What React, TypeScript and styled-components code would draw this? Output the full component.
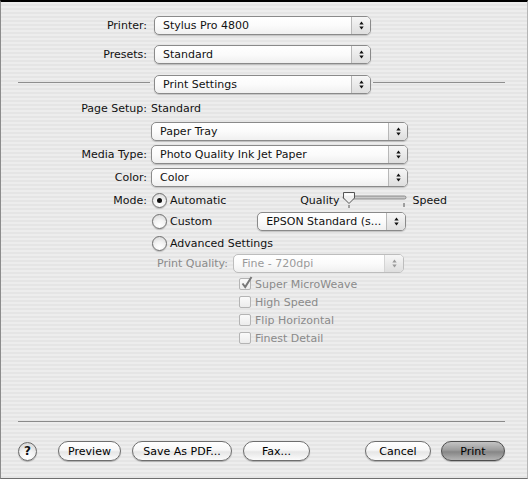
import React from "react";
import styled, { createGlobalStyle, css } from "styled-components";

const Global = createGlobalStyle`
  html, body { margin: 0; padding: 0; background: #e9e9e9; }
  body { font-family: "DejaVu Sans", "Liberation Sans", sans-serif; font-size: 11px; color: #111; }
  * { box-sizing: border-box; }
`;

const Window = styled.div`
  width: 528px;
  height: 479px;
  border-top: 2px solid #000;
  border-left: 1px solid #8c8c8c;
  border-right: 1px solid #b5b5b5;
  border-bottom: 1px solid #6f6f6f;
  background: repeating-linear-gradient(
    to bottom,
    #ededed 0px,
    #ededed 2px,
    #e5e5e5 2px,
    #e5e5e5 4px
  );
  display: flex;
  flex-direction: column;
`;

const Row = styled.div<{ $mt: number; $h?: number; $pl?: number }>`
  display: flex;
  align-items: center;
  margin-top: ${(p) => p.$mt}px;
  height: ${(p) => p.$h ?? 19}px;
  padding-left: ${(p) => p.$pl ?? 0}px;
  white-space: nowrap;
`;

const Label = styled.div<{ $disabled?: boolean }>`
  width: 146px;
  text-align: right;
  color: ${(p) => (p.$disabled ? "#8a8a8a" : "#111")};
`;

const PlainText = styled.span<{ $ml?: number; $disabled?: boolean }>`
  margin-left: ${(p) => p.$ml ?? 0}px;
  color: ${(p) => (p.$disabled ? "#8a8a8a" : "#111")};
`;

const PopupBox = styled.div<{ $w: number; $ml: number; $disabled?: boolean }>`
  position: relative;
  width: ${(p) => p.$w}px;
  height: 19px;
  margin-left: ${(p) => p.$ml}px;
  border: 1px solid ${(p) => (p.$disabled ? "#bdbdbd" : "#8a8a8a")};
  border-radius: 5px;
  background: linear-gradient(to bottom, #ffffff 0%, #fbfbfb 50%, #f0f0f0 100%);
  box-shadow: ${(p) => (p.$disabled ? "none" : "0 1px 1px rgba(0,0,0,0.18)")};
  display: flex;
  align-items: center;
  color: ${(p) => (p.$disabled ? "#9a9a9a" : "#111")};
`;

const PopupText = styled.span`
  flex: 1;
  padding-left: 8px;
  overflow: hidden;
`;

const PopupArrows = styled.div<{ $disabled?: boolean }>`
  width: 19px;
  height: 100%;
  border-left: 1px solid ${(p) => (p.$disabled ? "#d4d4d4" : "#b8b8b8")};
  border-radius: 0 4px 4px 0;
  background: linear-gradient(to bottom, #f6f6f6 0%, #e9e9e9 55%, #dedede 100%);
  display: flex;
  align-items: center;
  justify-content: center;
`;

const Arrows = ({ disabled }: { disabled?: boolean }) => (
  <svg width="7" height="11" viewBox="0 0 7 11">
    <polygon points="3.5,1.5 5.7,4.5 1.3,4.5" fill={disabled ? "#9a9a9a" : "#111"} />
    <polygon points="1.3,6.5 5.7,6.5 3.5,9.5" fill={disabled ? "#9a9a9a" : "#111"} />
  </svg>
);

const Popup = ({
  text,
  w,
  ml,
  disabled,
}: {
  text: string;
  w: number;
  ml: number;
  disabled?: boolean;
}) => (
  <PopupBox $w={w} $ml={ml} $disabled={disabled}>
    <PopupText>{text}</PopupText>
    <PopupArrows $disabled={disabled}>
      <Arrows disabled={disabled} />
    </PopupArrows>
  </PopupBox>
);

const Rule = styled.div<{ $ml: number; $w?: number; $mr?: number }>`
  height: 1px;
  background: #8e8e8e;
  margin-left: ${(p) => p.$ml}px;
  margin-right: ${(p) => p.$mr ?? 0}px;
  ${(p) =>
    p.$w
      ? css`
          width: ${p.$w}px;
        `
      : css`
          flex: 1;
        `}
  align-self: center;
  transform: translateY(-2px);
`;

const RadioCircle = styled.span<{ $ml: number; $on?: boolean }>`
  width: 15px;
  height: 15px;
  margin-left: ${(p) => p.$ml}px;
  border-radius: 50%;
  border: 1px solid #6e6e6e;
  background: radial-gradient(circle at 50% 80%, #ffffff 0%, #f3f3f3 45%, #d2d2d2 100%);
  box-shadow: 0 1px 1px rgba(0, 0, 0, 0.2);
  display: flex;
  align-items: center;
  justify-content: center;
  flex-shrink: 0;
  &::after {
    content: "";
    display: ${(p) => (p.$on ? "block" : "none")};
    width: 5px;
    height: 5px;
    border-radius: 50%;
    background: #111;
  }
`;

const RadioLabel = styled.span`
  margin-left: 3px;
`;

const SliderGroup = styled.div`
  display: flex;
  align-items: center;
  margin-left: auto;
  margin-right: 80px;
`;

const Slider = () => (
  <svg width="66" height="19" viewBox="0 0 66 19" style={{ margin: "0 5px 0 2px" }}>
    <rect x="1" y="5" width="63" height="3" rx="1.5" fill="#c9c9c9" stroke="#7a7a7a" strokeWidth="0.8" />
    <line x1="62" y1="12" x2="62" y2="16" stroke="#555" strokeWidth="1" />
    <line x1="7" y1="14" x2="7" y2="17" stroke="#555" strokeWidth="1" />
    <path d="M1.5 1.5 H12.5 V7 L7 12.5 L1.5 7 Z" fill="#efefef" stroke="#555" strokeWidth="1" />
    <path d="M2.5 2.5 H11.5 V4.5 H2.5 Z" fill="#ffffff" />
  </svg>
);

const CheckBox = styled.span`
  position: relative;
  width: 12px;
  height: 12px;
  border: 1px solid #b4b4b4;
  border-radius: 2px;
  background: linear-gradient(to bottom, #fafafa, #ececec);
  flex-shrink: 0;
`;

const CheckMark = styled.svg`
  position: absolute;
  left: 1px;
  top: -3px;
`;

const CheckLabel = styled.span`
  margin-left: 4px;
  color: #8a8a8a;
`;

const Check = ({ label, checked }: { label: string; checked?: boolean }) => (
  <Row $mt={0} $h={18} $pl={238}>
    <CheckBox>
      {checked && (
        <CheckMark width="12" height="13" viewBox="0 0 12 13">
          <path d="M1.5 7.5 L4.2 11 L10.5 1" fill="none" stroke="#777" strokeWidth="2" />
        </CheckMark>
      )}
    </CheckBox>
    <CheckLabel>{label}</CheckLabel>
  </Row>
);

const Spacer = styled.div`
  flex: 1;
`;

const Footer = styled.div`
  display: flex;
  flex-direction: column;
  padding-bottom: 17px;
`;

const FooterRule = styled.div`
  height: 1px;
  background: #8a8a8a;
  margin: 0 22px 0 17px;
`;

const ButtonRow = styled.div`
  display: flex;
  align-items: center;
  height: 20px;
  margin-top: 19px;
  padding-left: 17px;
  padding-right: 22px;
`;

const HelpButton = styled.div`
  width: 19px;
  height: 19px;
  border-radius: 50%;
  border: 1px solid #6a6a6a;
  background: radial-gradient(circle at 50% 85%, #ffffff 0%, #f1f1f1 45%, #cfcfcf 100%);
  box-shadow: 0 1px 1px rgba(0, 0, 0, 0.25);
  display: flex;
  align-items: center;
  justify-content: center;
  font-weight: bold;
  font-size: 12px;
  margin-right: 21px;
`;

const PushButton = styled.div<{ $w: number; $ml?: number; $default?: boolean }>`
  width: ${(p) => p.$w}px;
  height: 20px;
  margin-left: ${(p) => p.$ml ?? 0}px;
  border-radius: 10px;
  border: 1px solid ${(p) => (p.$default ? "#4e4e4e" : "#6e6e6e")};
  background: ${(p) =>
    p.$default
      ? "linear-gradient(to bottom, #c4c4c4 0%, #9c9c9c 45%, #868686 55%, #b4b4b4 100%)"
      : "linear-gradient(to bottom, #ffffff 0%, #f7f7f7 45%, #e6e6e6 55%, #fbfbfb 100%)"};
  box-shadow: 0 1px 1px rgba(0, 0, 0, 0.25);
  display: flex;
  align-items: center;
  justify-content: center;
  color: #000;
`;

export default function App() {
  return (
    <>
      <Global />
      <Window>
        <Row $mt={14}>
          <Label>Printer:</Label>
          <Popup text="Stylus Pro 4800" w={217} ml={7} />
        </Row>
        <Row $mt={10}>
          <Label>Presets:</Label>
          <Popup text="Standard" w={217} ml={7} />
        </Row>
        <Row $mt={11}>
          <Rule $ml={17} $w={132} />
          <Popup text="Print Settings" w={217} ml={4} />
          <Rule $ml={2} $mr={22} />
        </Row>
        <Row $mt={6} $h={16}>
          <Label>Page Setup:</Label>
          <PlainText $ml={4}>Standard</PlainText>
        </Row>
        <Row $mt={6}>
          <Label />
          <Popup text="Paper Tray" w={257} ml={4} />
        </Row>
        <Row $mt={4}>
          <Label>Media Type:</Label>
          <Popup text="Photo Quality Ink Jet Paper" w={257} ml={4} />
        </Row>
        <Row $mt={4}>
          <Label>Color:</Label>
          <Popup text="Color" w={257} ml={4} />
        </Row>
        <Row $mt={4}>
          <Label>Mode:</Label>
          <RadioCircle $ml={5} $on />
          <RadioLabel>Automatic</RadioLabel>
          <SliderGroup>
            <PlainText>Quality</PlainText>
            <Slider />
            <PlainText>Speed</PlainText>
          </SliderGroup>
        </Row>
        <Row $mt={2}>
          <Label />
          <RadioCircle $ml={5} />
          <RadioLabel>Custom</RadioLabel>
          <Popup text="EPSON Standard (s..." w={149} ml={45} />
        </Row>
        <Row $mt={3} $h={18}>
          <Label />
          <RadioCircle $ml={5} />
          <RadioLabel>Advanced Settings</RadioLabel>
        </Row>
        <Row $mt={2} $pl={156}>
          <PlainText $disabled>Print Quality:</PlainText>
          <Popup text="Fine - 720dpi" w={171} ml={5} disabled />
        </Row>
        <Row $mt={2} $h={0} />
        <Check label="Super MicroWeave" checked />
        <Check label="High Speed" />
        <Check label="Flip Horizontal" />
        <Check label="Finest Detail" />
        <Spacer />
        <Footer>
          <FooterRule />
          <ButtonRow>
            <HelpButton>?</HelpButton>
            <PushButton $w={63}>Preview</PushButton>
            <PushButton $w={100} $ml={11}>Save As PDF...</PushButton>
            <PushButton $w={67} $ml={11}>Fax...</PushButton>
            <Spacer />
            <PushButton $w={66}>Cancel</PushButton>
            <PushButton $w={64} $ml={10} $default>Print</PushButton>
          </ButtonRow>
        </Footer>
      </Window>
    </>
  );
}
